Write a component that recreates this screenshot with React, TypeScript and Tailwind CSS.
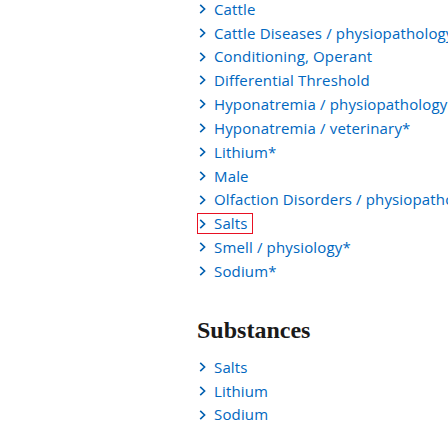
import React from "react";

const topics = [
  "Cattle",
  "Cattle Diseases / physiopathology",
  "Conditioning, Operant",
  "Differential Threshold",
  "Hyponatremia / physiopathology",
  "Hyponatremia / veterinary*",
  "Lithium*",
  "Male",
  "Olfaction Disorders / physiopathology",
  "Salts",
  "Smell / physiology*",
  "Sodium*",
];

const substances = ["Salts", "Lithium", "Sodium"];

function Chevron() {
  return (
    <svg width="7" height="10" viewBox="0 0 7 10" className="shrink-0">
      <path d="M1.2 0.8 L5.6 5 L1.2 9.2" fill="none" stroke="#005fb0" strokeWidth="1.6" />
    </svg>
  );
}

function Row({ label, focused }: { label: string; focused?: boolean }) {
  const inner = (
    <span className="flex items-center gap-[8px]">
      <Chevron />
      <span className="text-[#0067c0]">{label}</span>
    </span>
  );
  return (
    <li className="h-[23.85px] flex items-center">
      {focused ? (
        <span className="ml-[-2px] pl-[1px] pr-[4px] h-[21px] flex items-center border border-[#e81123]">
          {inner}
        </span>
      ) : (
        inner
      )}
    </li>
  );
}

export default function App() {
  return (
    <div
      className="w-[448px] h-[448px] overflow-hidden bg-white whitespace-nowrap text-[15px] tracking-[0.15px] text-[#0067c0]"
      style={{ fontFamily: '"Open Sans", "Noto Sans", sans-serif' }}
    >
      <div className="pl-[199px] mt-[-3px] flex flex-col">
        <ul className="flex flex-col">
          {topics.map((t) => (
            <Row key={t} label={t} focused={t === "Salts"} />
          ))}
        </ul>
        <section className="flex flex-col">
          <div className="h-[72px] pt-[35px]">
            <h2
              className="ml-[-2px] leading-[24px] text-[24px] font-bold tracking-normal text-[#1a1a1a]"
              style={{ fontFamily: '"Liberation Serif", serif' }}
            >
              Substances
            </h2>
          </div>
          <ul className="flex flex-col">
            {substances.map((t) => (
              <Row key={"s" + t} label={t} />
            ))}
          </ul>
        </section>
      </div>
    </div>
  );
}
